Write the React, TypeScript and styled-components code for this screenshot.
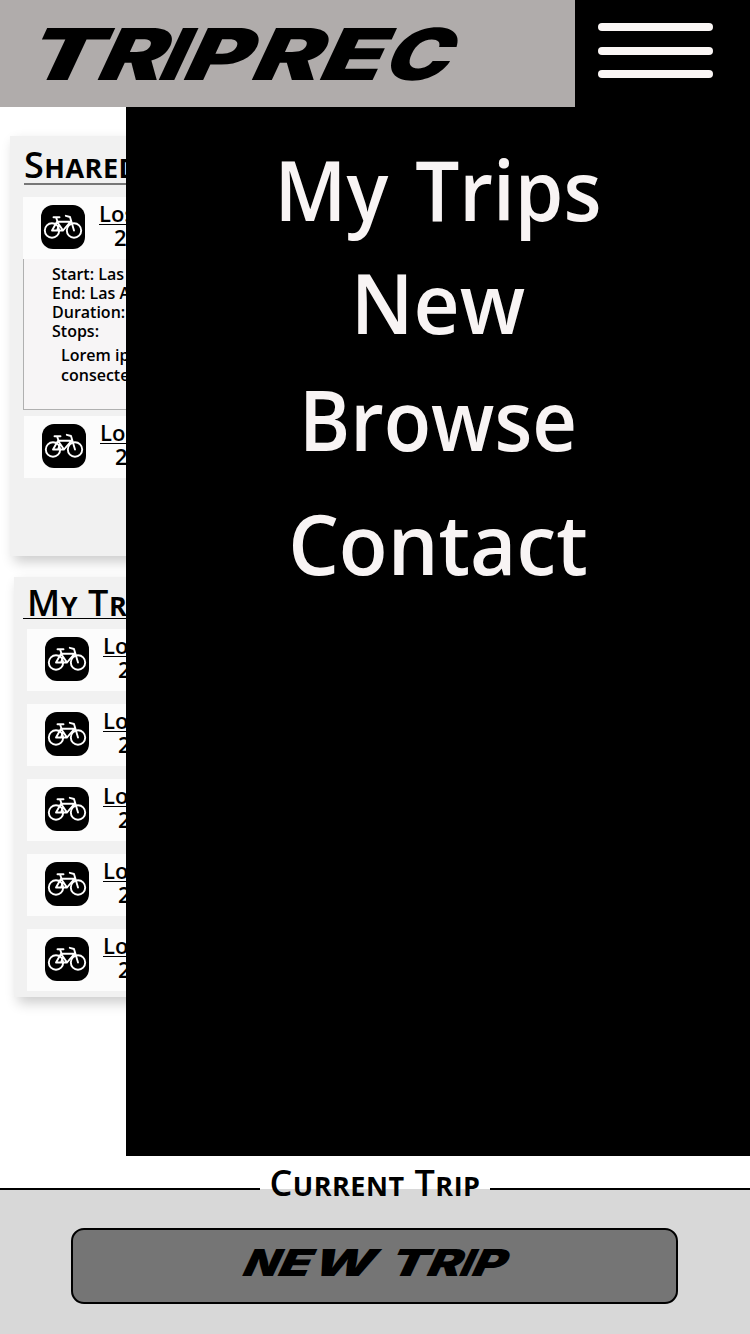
import React from "react";
import styled, { createGlobalStyle } from "styled-components";

const GlobalStyle = createGlobalStyle`
  * { box-sizing: border-box; }
  body {
    margin: 0;
    background: #fff;
    color: #000;
    font-family: "Open Sans", "Noto Sans", sans-serif;
    font-weight: 600;
  }
`;

const Page = styled.div`
  position: relative;
  display: flex;
  flex-direction: column;
  width: 750px;
  height: 1334px;
  overflow: hidden;
`;

const Header = styled.header`
  display: flex;
  height: 107px;
  background: #b0acab;
`;

const Brand = styled.div`
  width: 575px;
`;

const MenuButton = styled.button`
  flex: 1;
  display: flex;
  flex-direction: column;
  gap: 15.5px;
  padding: 23px 37px 0 23px;
  border: 0;
  background: #000;
`;

const MenuBar = styled.span`
  width: 115px;
  height: 8px;
  border-radius: 4px;
  background: #faf6f5;
`;

const Wordmark = styled.svg`
  display: block;
  font-family: Inter, sans-serif;
  font-weight: 900;
`;

const Content = styled.main`
  display: flex;
  flex-direction: column;
  gap: 21px;
  height: 1081px;
  padding-top: 29px;
`;

const Card = styled.section<{ $left: number }>`
  width: 720px;
  height: 420px;
  margin-left: ${(p) => p.$left}px;
  padding-left: 13px;
  background: #f1f1f1;
  box-shadow: 4px 6px 12px rgba(0, 0, 0, 0.2);
`;

const Heading = styled.h2`
  display: flex;
  gap: 10px;
  margin: 0;
  font-size: 27px;
  font-weight: 700;
  letter-spacing: 0.5px;
  text-transform: uppercase;
  white-space: nowrap;
`;

const Word = styled.span`
  display: block;

  &::first-letter {
    font-size: 36px;
    font-weight: 600;
  }
`;

const CardTitle = styled(Heading)<{ $height: number; $lineHeight: number; $line: string; $offset: number; $indent: number }>`
  height: ${(p) => p.$height}px;
  margin-left: ${(p) => p.$offset}px;
  padding-left: ${(p) => p.$indent}px;
  border-bottom: ${(p) => p.$line};
  line-height: ${(p) => p.$lineHeight}px;
`;

const List = styled.div<{ $top: number; $gap: number }>`
  display: flex;
  flex-direction: column;
  gap: ${(p) => p.$gap}px;
  padding-top: ${(p) => p.$top}px;
`;

const Row = styled.article<{ $shift?: number }>`
  display: flex;
  gap: 14px;
  height: 62px;
  margin-left: ${(p) => p.$shift ?? 0}px;
  padding: 8px 18px;
  background: #fcfcfc;
`;

const IconTile = styled.div`
  display: flex;
  align-items: center;
  justify-content: center;
  width: 44px;
  height: 44px;
  border-radius: 12px;
  background: #000;
`;

const RowText = styled.div`
  display: flex;
  flex-direction: column;
  margin-top: -4px;
  font-size: 22px;
  line-height: 24px;
`;

const Place = styled.span`
  text-decoration: underline;
  text-decoration-thickness: 1px;
  text-underline-offset: 2px;
`;

const Distance = styled.span`
  padding-left: 15px;
`;

const Details = styled.div`
  height: 151px;
  margin-bottom: 6px;
  padding: 6px 0 0 28px;
  border-left: 1px solid #b0b0b0;
  border-bottom: 1px solid #b0b0b0;
  background: #f7f5f6;
  font-size: 16px;
  line-height: 19px;
`;

const Stops = styled.p`
  width: 260px;
  margin: 4px 0 0 9px;
  line-height: 20px;
`;

const Menu = styled.nav`
  position: absolute;
  top: 107px;
  right: 0;
  width: 624px;
  height: 1049px;
  padding-top: 26px;
  background: #000;
`;

const MenuItem = styled.a<{ $height: number; $stretch: number }>`
  display: block;
  height: ${(p) => p.$height}px;
  color: #f8f4f4;
  font-size: 84px;
  line-height: 112px;
  word-spacing: 7px;
  text-align: center;
  transform: scaleX(${(p) => p.$stretch});
`;

const Footer = styled.footer`
  display: flex;
  flex-direction: column;
  align-items: center;
  height: 146px;
  background: linear-gradient(#fff 1px, #d8d8d8 1px);
`;

const Legend = styled.div`
  display: flex;
  width: 100%;
  height: 40px;

  &::before,
  &::after {
    content: "";
    flex: 1;
    height: 2px;
    background: #000;
  }
`;

const LegendText = styled(Heading)`
  justify-content: center;
  width: 230px;
  margin-top: -29px;
  line-height: 48px;
`;

const NewTripButton = styled.button`
  width: 607px;
  height: 76px;
  margin-right: 1px;
  padding: 0;
  border: 2px solid #000;
  border-radius: 13px;
  background: #757575;
`;

type Letter = [char: string, x: number, width: number];

const Lettering = ({ letters, size, x, y }: { letters: Letter[]; size: number; x: number; y: number }) => (
  <g transform={`translate(${x} ${y}) skewX(-25)`}>
    <text fontSize={size}>
      {letters.map(([char, left, width], i) => (
        <tspan key={i} x={left} textLength={width} lengthAdjust="spacingAndGlyphs">
          {char}
        </tspan>
      ))}
    </text>
  </g>
);

const Bicycle = () => (
  <svg width="40" height="26" viewBox="0 0 40 26" fill="none" stroke="#fff" strokeWidth="1.9" strokeLinecap="round" strokeLinejoin="round">
    <circle cx="9" cy="16.5" r="7.2" />
    <circle cx="31" cy="16.5" r="7.2" />
    <path d="M9 16.5 14 7.8 20 16.5H9M10.5 3.2h6M13 3.2 14.6 7.8M14.4 7.8H27.4M14 16.5 16 11M20 16.5 27.4 7.8M31 16.5 27 3 22.8 1.8" />
  </svg>
);

const Trip = ({ shift }: { shift?: number }) => (
  <Row $shift={shift}>
    <IconTile>
      <Bicycle />
    </IconTile>
    <RowText>
      <Place>Los Angeles</Place>
      <Distance>22 miles</Distance>
    </RowText>
  </Row>
);

const brandLetters: Letter[] = [
  ["T", 20, 74],
  ["R", 93, 65],
  ["I", 155, 23],
  ["P", 179, 65],
  ["R", 247, 68],
  ["E", 315, 62],
  ["C", 379, 65],
];

const newTripLetters: Letter[] = [
  ["N", -2, 35],
  ["E", 33, 32],
  ["W", 67, 62],
  ["T", 144, 38],
  ["R", 182, 34],
  ["I", 215, 12],
  ["P", 227, 33],
];

export default function App() {
  return (
    <Page>
      <GlobalStyle />
      <Header>
        <Brand>
          <Wordmark width="575" height="107">
            <Lettering letters={brandLetters} size={71.5} x={0} y={80} />
          </Wordmark>
        </Brand>
        <MenuButton aria-label="Menu">
          <MenuBar />
          <MenuBar />
          <MenuBar />
        </MenuButton>
      </Header>
      <Content>
        <Card $left={10}>
          <CardTitle $height={49} $lineHeight={58} $line="2px solid #777" $offset={1} $indent={0}>
            <Word>Shared</Word>
            <Word>Trips</Word>
          </CardTitle>
          <List $top={12} $gap={0}>
            <Trip />
            <Details>
              <div>Start: Las Angeles</div>
              <div>End: Las Angeles</div>
              <div>Duration: 2 hours</div>
              <div>Stops:</div>
              <Stops>Lorem ipsum dolor sit amet, consectetur adipiscing</Stops>
            </Details>
            <Trip shift={1} />
          </List>
        </Card>
        <Card $left={14}>
          <CardTitle $height={42} $lineHeight={52} $line="1px solid #000" $offset={-4} $indent={4}>
            <Word>My</Word>
            <Word>Trips</Word>
          </CardTitle>
          <List $top={10} $gap={13}>
            <Trip />
            <Trip />
            <Trip />
            <Trip />
            <Trip />
          </List>
        </Card>
      </Content>
      <Footer>
        <Legend>
          <LegendText>
            <Word>Current</Word>
            <Word>Trip</Word>
          </LegendText>
        </Legend>
        <NewTripButton aria-label="New Trip">
          <Wordmark width="603" height="72">
            <Lettering letters={newTripLetters} size={37} x={169} y={45.5} />
          </Wordmark>
        </NewTripButton>
      </Footer>
      <Menu>
        <MenuItem $height={113} $stretch={0.93}>My Trips</MenuItem>
        <MenuItem $height={117} $stretch={0.955}>New</MenuItem>
        <MenuItem $height={124} $stretch={0.925}>Browse</MenuItem>
        <MenuItem $height={124} $stretch={0.952}>Contact</MenuItem>
      </Menu>
    </Page>
  );
}
